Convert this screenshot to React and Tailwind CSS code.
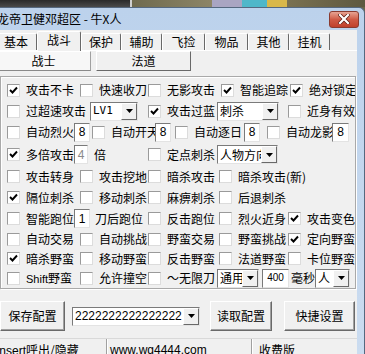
import React from 'react'

function Tick() {
  return (
    <svg width="9" height="9" viewBox="0 0 9 9">
      <path d="M1 4 L3.5 6.5 L8 1.5" fill="none" stroke="#000" strokeWidth="1.9" />
    </svg>
  )
}

function Check({ on }) {
  return (
    <span className="w-[13px] h-[13px] shrink-0 bg-white border border-t-[#9a9a9a] border-l-[#9a9a9a] border-r-[#dcdcdc] border-b-[#dcdcdc] flex items-center justify-center">
      {on && <Tick />}
    </span>
  )
}

function Item({ w, on, clip, children }) {
  return (
    <div className={`${w} h-[19px] shrink-0 flex items-center whitespace-nowrap ${clip ? 'overflow-hidden' : ''}`}>
      <Check on={on} />
      <span className="ml-[6px]">{children}</span>
    </div>
  )
}

function Tri() {
  return (
    <svg width="7" height="4" viewBox="0 0 7 4">
      <path d="M0 0 H7 L3.5 4 Z" fill="#000" />
    </svg>
  )
}

function Combo({ w, children }) {
  return (
    <div className={`${w} h-[19px] shrink-0 flex bg-white border border-t-[#7a7a7a] border-l-[#7a7a7a] border-r-[#e3e3e3] border-b-[#e3e3e3]`}>
      <div className="flex-1 min-w-0 overflow-hidden whitespace-nowrap pl-[2px] flex items-center">{children}</div>
      <div className="w-[16px] shrink-0 bg-[#f0f0f0] border border-t-white border-l-white border-r-[#696969] border-b-[#696969] flex items-center justify-center">
        <Tri />
      </div>
    </div>
  )
}

function Field({ w, children, dim }) {
  return (
    <div className={`${w} h-[19px] shrink-0 flex items-center justify-center bg-white border border-t-[#7a7a7a] border-l-[#7a7a7a] border-r-[#e3e3e3] border-b-[#e3e3e3] font-['Liberation_Sans'] text-[12px] ${dim ? 'text-[#8a8a8a] bg-[#f4f4f4]' : 'text-black'}`}>
      {children}
    </div>
  )
}

function Btn({ w, children }) {
  return (
    <div className={`${w} h-[30px] shrink-0 flex items-center justify-center bg-[#f0f0f0] border border-t-white border-l-white border-r-[#696969] border-b-[#696969] shadow-[inset_-1px_-1px_0_#a0a0a0]`}>
      {children}
    </div>
  )
}

function Tab({ w, children, active }) {
  if (active) {
    return (
      <div className={`${w} h-[20px] mb-[-1px] z-10 shrink-0 bg-[#f0f0f0] border-t border-l border-white border-r border-r-[#696969] rounded-t-[2px] flex items-start justify-center pt-[1px]`}>
        {children}
      </div>
    )
  }
  return (
    <div className={`${w} h-[17px] shrink-0 bg-[#f0f0f0] border-t border-l border-white border-r border-r-[#696969] rounded-t-[2px] flex items-center justify-center`}>
      {children}
    </div>
  )
}

export default function App() {
  return (
    <div className="w-[365px] h-[354px] overflow-hidden flex flex-col bg-[#6b6548] font-['Noto_Sans_CJK_SC','Liberation_Sans',sans-serif] text-[12px] leading-[14px] text-black">
      <div className="h-[7px] shrink-0 flex">
        <div className="w-[130px] bg-gradient-to-b from-[#2a2a2a] to-[#4a4a4a]" />
        <div className="w-[2px] bg-[#cfcfcf]" />
        <div className="flex-1 flex">
          <div className="w-[80px] bg-gradient-to-r from-[#6f6a4e] to-[#8d8566]" />
          <div className="w-[30px] bg-[#a9a5c2]" />
          <div className="w-[25px] bg-[#4fb7c9]" />
          <div className="w-[20px] bg-[#d9b84a]" />
          <div className="flex-1 bg-gradient-to-r from-[#7a7150] to-[#5d5840]" />
        </div>
      </div>

      <div className="flex-1 flex flex-col bg-gradient-to-b from-[#bcd2ec] to-[#cbdcf0] border-t border-r border-[#55687f] rounded-tr-[6px]">
        <div className="h-[22px] shrink-0 flex items-center justify-between">
          <span className="ml-[-3px] text-[12px] text-black whitespace-nowrap">龙帝卫健邓超区 - 牛X人</span>
          <div className="w-[30px] h-[17px] mr-[5px] rounded-[3px] border border-[#8a3b30] bg-gradient-to-b from-[#e6a393] via-[#cf5a45] to-[#c0412c] flex items-center justify-center">
            <svg width="12" height="10" viewBox="0 0 12 10">
              <path d="M2 1 L10 9 M10 1 L2 9" stroke="#5a1a12" strokeWidth="3.6" strokeLinecap="square" />
              <path d="M2 1 L10 9 M10 1 L2 9" stroke="#fff" strokeWidth="2.2" strokeLinecap="square" />
            </svg>
          </div>
        </div>

        <div className="flex-1 flex flex-col bg-[#f0f0f0] mr-[7px] overflow-hidden">
          <div className="h-[20px] mt-[1px] shrink-0 flex items-end ml-[-5px] border-b border-white">
            <Tab w="w-[42px]">基本</Tab>
            <Tab w="w-[44px]" active>战斗</Tab>
            <Tab w="w-[40px]">保护</Tab>
            <Tab w="w-[41px]">辅助</Tab>
            <Tab w="w-[43px]">飞捡</Tab>
            <Tab w="w-[43px]">物品</Tab>
            <Tab w="w-[41px]">其他</Tab>
            <Tab w="w-[41px]">挂机</Tab>
          </div>

          <div className="h-[20px] shrink-0 flex ml-[-4px]">
            <div className="w-[95px] bg-[#f7f7f7] border border-t-white border-l-white border-r-[#a0a0a0] border-b-[#8a8a8a] flex items-center justify-center">战士</div>
            <div className="w-[95px] ml-[5px] bg-[#f0f0f0] border border-t-white border-l-white border-r-[#696969] border-b-[#696969] flex items-center justify-center">法道</div>
          </div>

          <div className="h-[213px] mt-[5px] shrink-0 border border-[#a9a9a9] shadow-[inset_1px_1px_0_#fff,1px_1px_0_#fff] flex flex-col pt-[3px] pl-[6px] mr-[1px] overflow-hidden">
            <div className="h-[21px] flex items-center">
              <Item w="w-[73px]" on>攻击不卡</Item>
              <Item w="w-[68px]" clip>快速收刀</Item>
              <Item w="w-[73px]">无影攻击</Item>
              <Item w="w-[69px]" on>智能追踪</Item>
              <Item w="w-[66px]" on>绝对锁定</Item>
            </div>
            <div className="h-[21px] flex items-center">
              <Item w="w-[83px]">过超速攻击</Item>
              <Combo w="w-[48px]"><span className="font-['DejaVu_Sans_Mono'] text-[11px]">LV1</span></Combo>
              <div className="w-[10px] shrink-0" />
              <Item w="w-[69px]" on>攻击过蓝</Item>
              <Combo w="w-[62px]">刺杀</Combo>
              <div className="w-[9px] shrink-0" />
              <Item w="w-[66px]">近身有效</Item>
            </div>
            <div className="h-[21px] flex items-center">
              <Item w="w-[67px]">自动烈火</Item>
              <Field w="w-[16px]">8</Field>
              <div className="w-[2px] shrink-0" />
              <Item w="w-[63px]">自动开天</Item>
              <Field w="w-[16px]">8</Field>
              <div className="w-[4px] shrink-0" />
              <Item w="w-[69px]">自动逐日</Item>
              <Field w="w-[16px]">8</Field>
              <div className="w-[7px] shrink-0" />
              <Item w="w-[65px]">自动龙影</Item>
              <Field w="w-[17px]">8</Field>
            </div>
            <div className="h-[24px] flex items-center">
              <Item w="w-[67px]" on>多倍攻击</Item>
              <Field w="w-[14px]" dim>4</Field>
              <span className="w-[60px] shrink-0 pl-[6px]">倍</span>
              <Item w="w-[69px]">定点刺杀</Item>
              <Combo w="w-[61px]">人物方向</Combo>
            </div>
            <div className="h-[21px] flex items-center">
              <Item w="w-[73px]">攻击转身</Item>
              <Item w="w-[68px]">攻击挖地</Item>
              <Item w="w-[71px]">暗杀攻击</Item>
              <Item w="w-[100px]">暗杀攻击(新)</Item>
            </div>
            <div className="h-[21px] flex items-center">
              <Item w="w-[73px]" on>隔位刺杀</Item>
              <Item w="w-[68px]">移动刺杀</Item>
              <Item w="w-[71px]">麻痹刺杀</Item>
              <Item w="w-[100px]">后退刺杀</Item>
            </div>
            <div className="h-[21px] flex items-center">
              <Item w="w-[67px]">智能跑位</Item>
              <Field w="w-[16px]">1</Field>
              <span className="w-[58px] shrink-0 pl-[5px] whitespace-nowrap">刀后跑位</span>
              <Item w="w-[71px]">反击跑位</Item>
              <Item w="w-[69px]">烈火近身</Item>
              <Item w="w-[66px]" on>攻击变色</Item>
            </div>
            <div className="h-[20px] flex items-center">
              <Item w="w-[73px]">自动交易</Item>
              <Item w="w-[68px]">自动挑战</Item>
              <Item w="w-[71px]">野蛮交易</Item>
              <Item w="w-[69px]">野蛮挑战</Item>
              <Item w="w-[66px]" on>定向野蛮</Item>
            </div>
            <div className="h-[19px] flex items-center">
              <Item w="w-[73px]" on>暗杀野蛮</Item>
              <Item w="w-[68px]">移动野蛮</Item>
              <Item w="w-[71px]">反击野蛮</Item>
              <Item w="w-[69px]">法道野蛮</Item>
              <Item w="w-[66px]">卡位野蛮</Item>
            </div>
            <div className="h-[20px] flex items-center">
              <Item w="w-[73px]"><span className="font-['Liberation_Sans'] text-[11px]">Shift</span>野蛮</Item>
              <Item w="w-[68px]">允许撞空</Item>
              <Item w="w-[69px]">～无限刀</Item>
              <Combo w="w-[42px]">通用</Combo>
              <div className="w-[3px] shrink-0" />
              <Field w="w-[27px]"><span className="text-[10px]">400</span></Field>
              <span className="w-[26px] shrink-0 pl-[2px] whitespace-nowrap">毫秒</span>
              <Combo w="w-[35px]">人</Combo>
            </div>
          </div>

          <div className="h-[30px] mt-[12px] shrink-0 flex items-center">
            <Btn w="w-[65px]">保存配置</Btn>
            <div className="w-[7px] shrink-0" />
            <Combo w="w-[128px]"><span className="font-['Liberation_Sans'] text-[12px]">2222222222222222</span></Combo>
            <div className="w-[10px] shrink-0" />
            <Btn w="w-[62px]">读取配置</Btn>
            <div className="w-[12px] shrink-0" />
            <Btn w="w-[71px]">快捷设置</Btn>
          </div>

          <div className="flex-1 mt-[7px] flex border-t border-[#d9d9d9] text-[12px]">
            <div className="w-[107px] shrink-0 overflow-hidden whitespace-nowrap pt-[4px] border-r border-[#a0a0a0]">
              <span className="ml-[-4px] font-['Liberation_Sans']">Insert</span><span>呼出/隐藏</span>
            </div>
            <div className="w-[145px] shrink-0 pl-[2px] pt-[4px] border-l border-white border-r border-r-[#a0a0a0] font-['Liberation_Sans']">www.wg4444.com</div>
            <div className="flex-1 pl-[6px] pt-[4px] border-l border-white">收费版</div>
          </div>
        </div>
      </div>
    </div>
  )
}
